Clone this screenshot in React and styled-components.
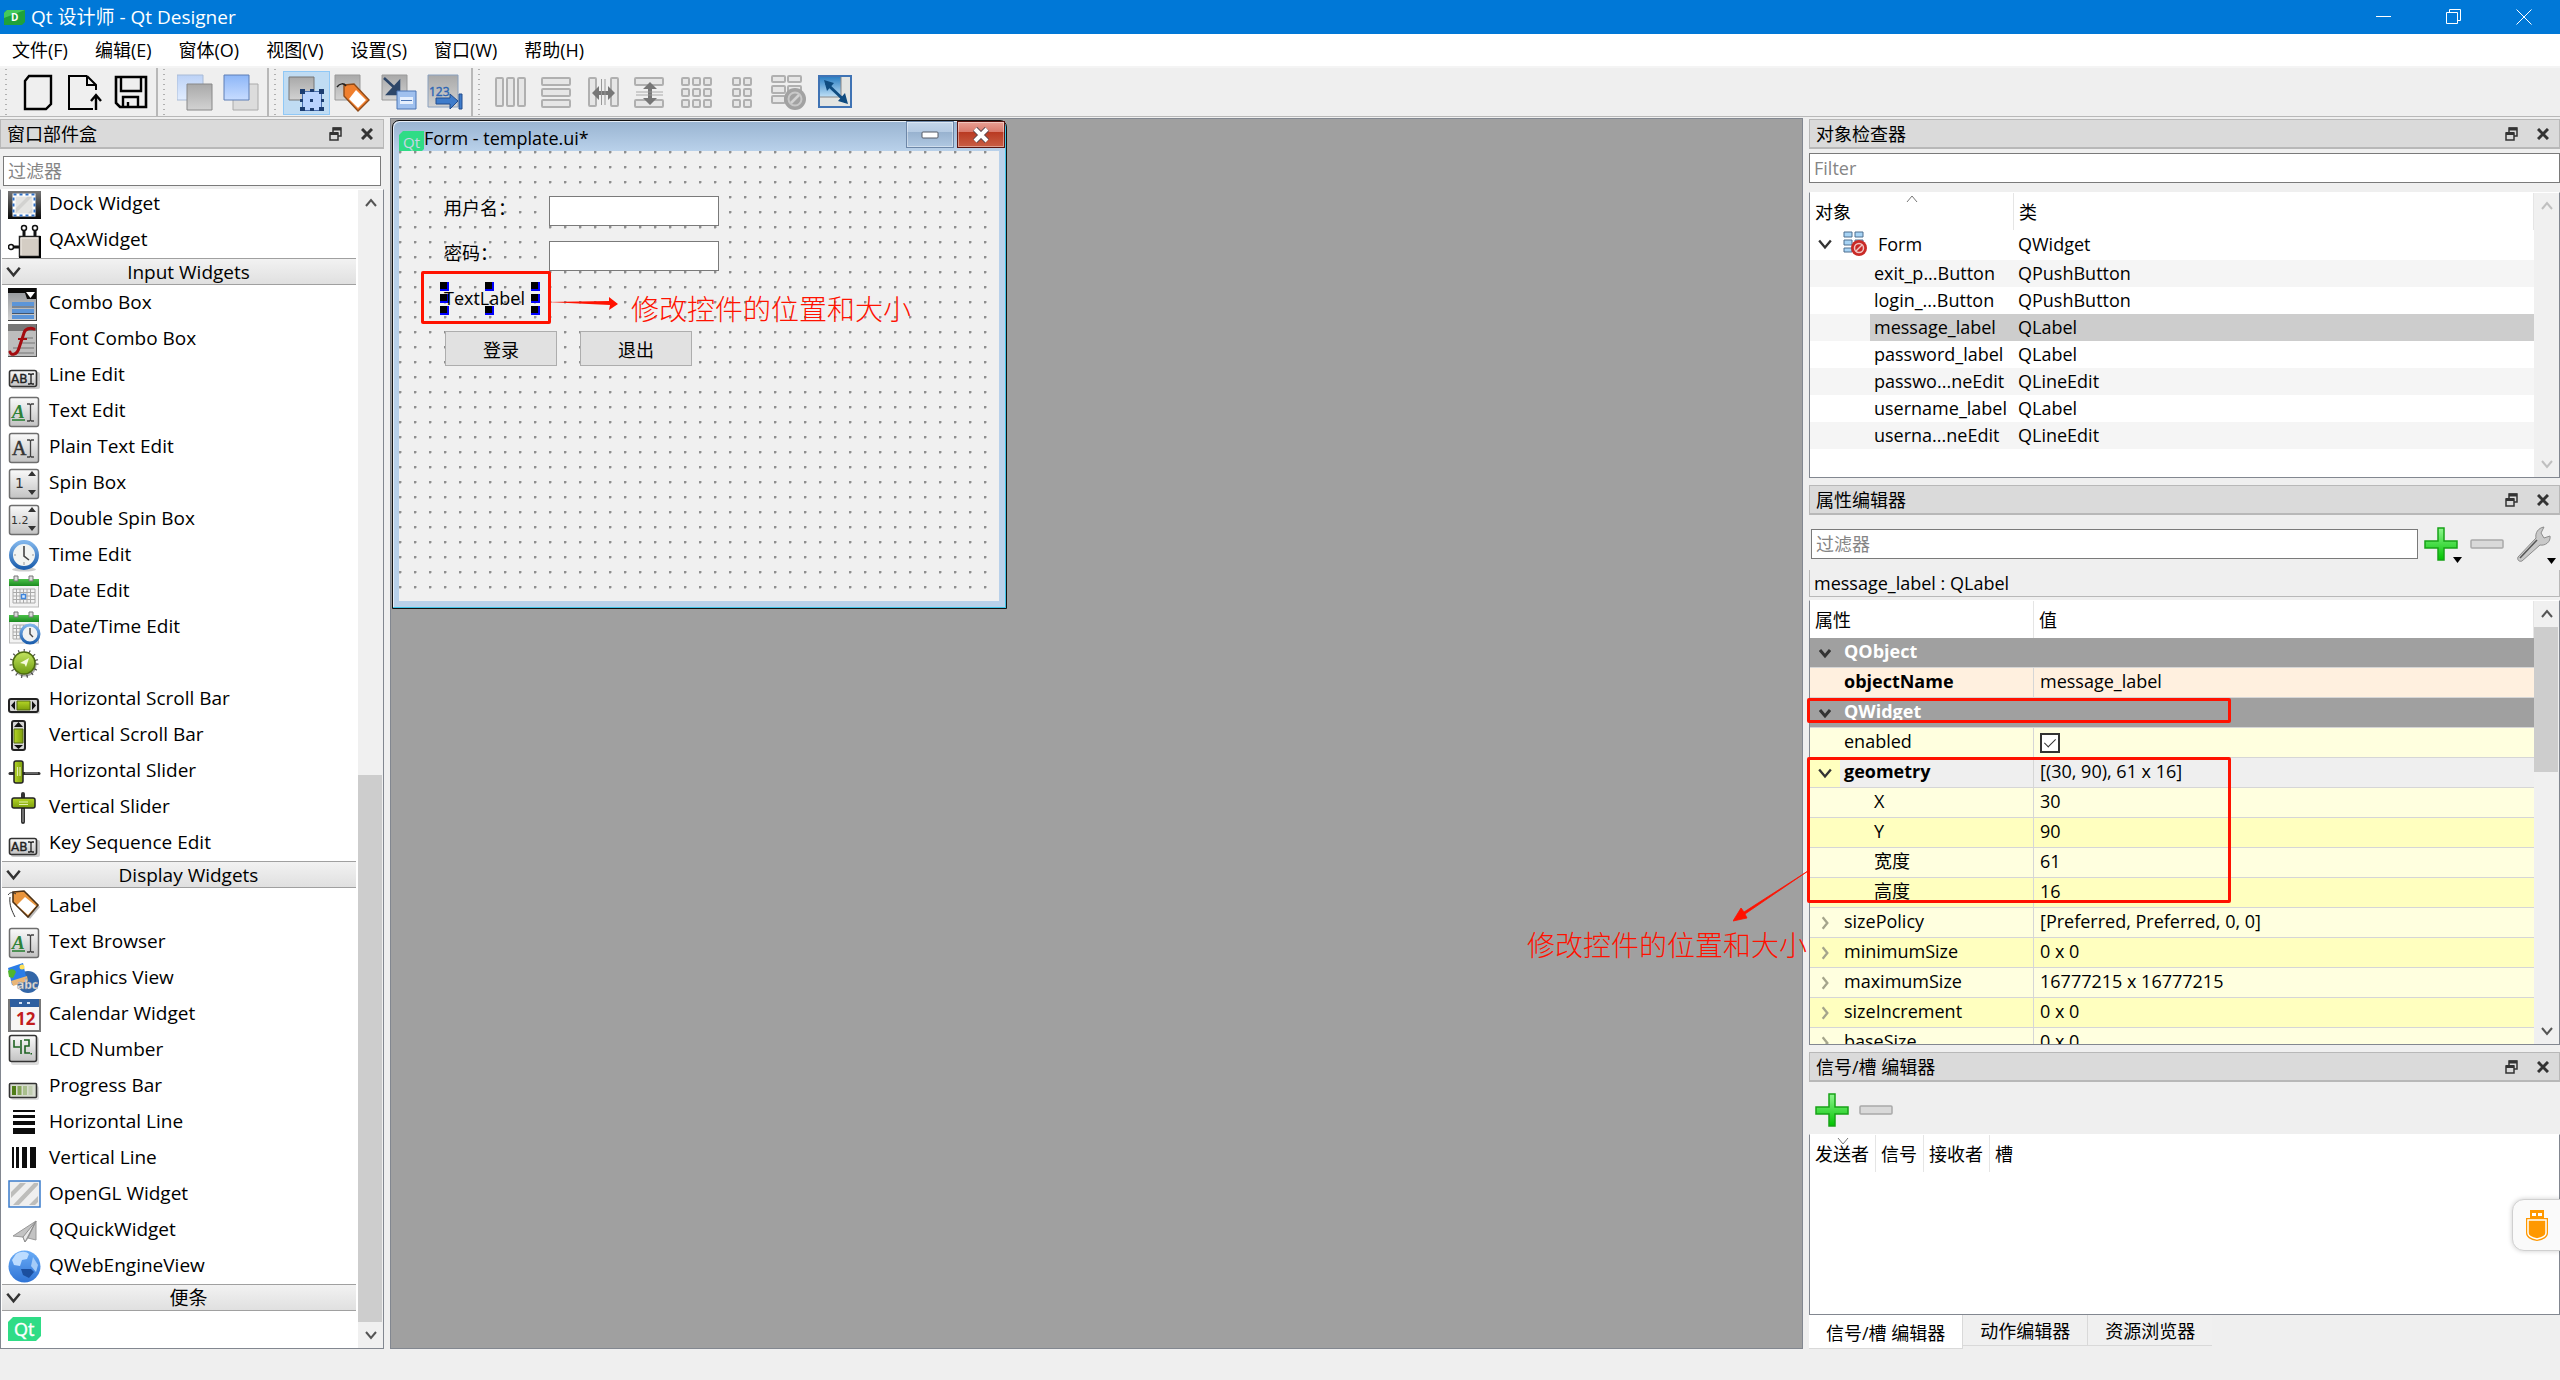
import React, { useState } from 'react';
import styled, { createGlobalStyle, css } from 'styled-components';

const menus = ['文件(F)', '编辑(E)', '窗体(O)', '视图(V)', '设置(S)', '窗口(W)', '帮助(H)'];

const toolGroups = [
    ['new', 'open', 'save'],
    ['back', 'front'],
    ['editWidgets', 'editSignals', 'editBuddies', 'editTabOrder'],
    ['hLayout', 'vLayout', 'hSplit', 'vSplit', 'grid', 'formLayout', 'breakLayout', 'adjustSize'],
];

const widgetGroups = [
    {
        title: null,
        items: [['dock', 'Dock Widget'], ['ax', 'QAxWidget']],
    },
    {
        title: 'Input Widgets',
        items: [
            ['combo', 'Combo Box'],
            ['fontCombo', 'Font Combo Box'],
            ['lineEdit', 'Line Edit'],
            ['textEdit', 'Text Edit'],
            ['plainText', 'Plain Text Edit'],
            ['spin', 'Spin Box'],
            ['doubleSpin', 'Double Spin Box'],
            ['time', 'Time Edit'],
            ['date', 'Date Edit'],
            ['dateTime', 'Date/Time Edit'],
            ['dial', 'Dial'],
            ['hScroll', 'Horizontal Scroll Bar'],
            ['vScroll', 'Vertical Scroll Bar'],
            ['hSlider', 'Horizontal Slider'],
            ['vSlider', 'Vertical Slider'],
            ['lineEdit', 'Key Sequence Edit'],
        ],
    },
    {
        title: 'Display Widgets',
        items: [
            ['label', 'Label'],
            ['textEdit', 'Text Browser'],
            ['graphics', 'Graphics View'],
            ['calendar', 'Calendar Widget'],
            ['lcd', 'LCD Number'],
            ['progress', 'Progress Bar'],
            ['hLine', 'Horizontal Line'],
            ['vLine', 'Vertical Line'],
            ['openGL', 'OpenGL Widget'],
            ['quick', 'QQuickWidget'],
            ['web', 'QWebEngineView'],
        ],
    },
    {
        title: '便条',
        items: [['qt', '']],
    },
];

const objects = [
    ['exit_p...Button', 'QPushButton'],
    ['login_...Button', 'QPushButton'],
    ['message_label', 'QLabel'],
    ['password_label', 'QLabel'],
    ['passwo...neEdit', 'QLineEdit'],
    ['username_label', 'QLabel'],
    ['userna...neEdit', 'QLineEdit'],
];

const properties = [
    { name: 'QObject', group: true },
    { name: 'objectName', value: 'message_label', bold: true, bg: '#fff0df' },
    { name: 'QWidget', group: true },
    { name: 'enabled', check: true, bg: '#ffffdf' },
    { name: 'geometry', value: '[(30, 90), 61 x 16]', bold: true, open: true, bg: '#efefef' },
    { name: 'X', value: '30', sub: true, bg: '#ffffdf' },
    { name: 'Y', value: '90', sub: true, bg: '#ffffbf' },
    { name: '宽度', value: '61', sub: true, bg: '#ffffdf' },
    { name: '高度', value: '16', sub: true, bg: '#ffffbf' },
    { name: 'sizePolicy', value: '[Preferred, Preferred, 0, 0]', closed: true, bg: '#ffffdf' },
    { name: 'minimumSize', value: '0 x 0', closed: true, bg: '#ffffbf' },
    { name: 'maximumSize', value: '16777215 x 16777215', closed: true, bg: '#ffffdf' },
    { name: 'sizeIncrement', value: '0 x 0', closed: true, bg: '#ffffbf' },
    { name: 'baseSize', value: '0 x 0', closed: true, bg: '#ffffdf' },
];

// selection handles around the label: [x, y]
const handles = [
    [41, 131], [86, 131], [132, 131],
    [41, 143], [132, 143],
    [41, 155], [86, 155], [132, 155],
];

const serif = 'Liberation Serif, serif';
const sans = 'Open Sans, sans-serif';

const Frame = ({ y = 4, h = 30, w = 29 }) => (
    <rect x="1.5" y={y + 0.5} width={w} height={h - 1} rx="2" fill="url(#gray)" stroke="#6e6e6e" strokeWidth="1.5" />
);

const IBeam = ({ x }) => (
    <path d={`M${x - 3} 11h2.5l1 1 1-1h2.5M${x + 0.5} 12v15M${x - 3} 28h2.5l1-1 1 1h2.5`} fill="none" stroke="#444" strokeWidth="1.3" />
);

const Arrows = () => <path d="M20 11h8l-4-5zM20 25h8l-4 5z" fill="#333" />;

const CalendarBody = () => (
    <>
        <rect x="1.5" y="9" width="29" height="25" fill="#f3f3f3" stroke="#bbb" />
        <path d="M1 6h30v7H1z" fill="url(#greenBar)" />
        <path d="M6 3h4v5H6zM21 3h4v5h-4z" fill="#ddd" stroke="#777" />
        <path d="M5 16h22M5 19.500h22M5 23h22M5 26.500h22M5 30h22M5 16v14M8.500 16v14M12 16v14M15.500 16v14M19 16v14M22.500 16v14M27 16v14" stroke="#aaa" fill="none" />
    </>
);

const widgetIcons = {
    dock: (
        <>
            <path d="M0 5h33v28H0z" fill="url(#darkBar)" />
            <path d="M6 9h20v20H6z" fill="#e4e4e2" />
            <path d="M6 24L21 9h5L6 29zM18 29l8-8v5l-3 3z" fill="#d2d2d0" />
            <rect x="6" y="9" width="20" height="20" fill="none" stroke="#fff" strokeWidth="3" />
            <rect x="5.500" y="8.500" width="21" height="21" fill="none" stroke="#2f6fc4" strokeWidth="2" strokeDasharray="3 3" />
        </>
    ),
    ax: (
        <>
            <path d="M0 25h11M16 7v8M27 7v8" stroke="#111" strokeWidth="3" />
            <circle cx="16" cy="6" r="2.500" fill="#fff" stroke="#111" strokeWidth="1.500" />
            <circle cx="27" cy="6" r="2.500" fill="#fff" stroke="#111" strokeWidth="1.500" />
            <circle cx="3" cy="25" r="2.500" fill="#fff" stroke="#111" strokeWidth="1.500" />
            <path d="M11.500 14.500h20v20h-20z" fill="#d4cdc4" stroke="#222" strokeWidth="1.500" />
            <path d="M32 14v21.500H11" stroke="#000" strokeWidth="2" fill="none" />
            <path d="M13 33V16h17" stroke="#f2ede6" fill="none" />
        </>
    ),
    combo: (
        <>
            <path d="M0 3h29v33H0z" fill="url(#grayDark)" />
            <path d="M0 3h29v11H19l-2-6H0z" fill="#0a0a0a" />
            <path d="M18 7h9l-4.500 6z" fill="#fff" />
            <path d="M4 17h22v4H4zM4 24h22v4H4zM4 30h22v4H4z" fill="#5c95d8" />
            <path d="M4 22h22M4 28.500h22" stroke="#43556b" />
            <path d="M28.500 3v33M0 35.500h29" stroke="#444" />
        </>
    ),
    fontCombo: (
        <>
            <path d="M0 3h29v33H0z" fill="#bdbdbd" />
            <path d="M0 3h29v7H0z" fill="#777" />
            <path d="M14 17h11M14 22h13M5 27h21M8 32h18" stroke="#999" strokeWidth="2" />
            <path d="M2 31c1 4 7 3 9-4l5-15c1-4 6-6 10-4" fill="none" stroke="#a40c10" strokeWidth="3" strokeLinecap="round" />
            <path d="M10 18h9" stroke="#a40c10" strokeWidth="2" />
            <path d="M28.500 3v33M0 35.500h29" stroke="#555" />
        </>
    ),
    lineEdit: (
        <>
            <rect x="3" y="15" width="29" height="17" rx="2" fill="#0003" />
            <rect x="1.500" y="13.500" width="27" height="16" rx="2" fill="url(#gray)" stroke="#333" strokeWidth="1.600" />
            <text x="3" y="26" fontFamily="DejaVu Sans" fontSize="12" fill="#222" stroke="#222" strokeWidth=".4">AB</text>
            <path d="M20 17h2l1 1 1-1h2M23 18v8M20 27h2l1-1 1 1h2" fill="none" stroke="#222" strokeWidth="1.300" />
        </>
    ),
    textEdit: (
        <>
            <Frame />
            <text x="4" y="25" fontFamily={serif} fontStyle="italic" fontWeight="700" fontSize="19" fill="#2e8238">A</text>
            <path d="M4 27h13" stroke="#2e8238" strokeWidth="1.600" />
            <IBeam x={22} />
        </>
    ),
    plainText: (
        <>
            <Frame />
            <text x="4" y="26" fontFamily={serif} fontSize="20" fill="#333" stroke="#333" strokeWidth=".5">A</text>
            <IBeam x={22} />
        </>
    ),
    spin: (
        <>
            <Frame />
            <text x="7" y="23" fontFamily="DejaVu Sans" fontSize="14" fill="#333">1</text>
            <Arrows />
        </>
    ),
    doubleSpin: (
        <>
            <Frame />
            <text x="3" y="23" fontFamily="DejaVu Sans" fontSize="11" fill="#333">1.2</text>
            <Arrows />
        </>
    ),
    time: (
        <>
            <ellipse cx="16" cy="32.500" rx="12" ry="2" fill="#0003" />
            <circle cx="16" cy="18" r="13" fill="#f2f4f2" stroke="url(#blueRing)" strokeWidth="4" />
            <path d="M16 9v10l5 4" fill="none" stroke="#444" strokeWidth="1.600" />
            <path d="M6 18h2M24 18h2M16 25v3" stroke="#999" />
        </>
    ),
    date: (
        <>
            <CalendarBody />
            <path d="M13.500 21.500h4v4h-4z" fill="#d8eaff" stroke="#3f86dc" strokeWidth="1.400" />
        </>
    ),
    dateTime: (
        <>
            <CalendarBody />
            <circle cx="22" cy="25" r="9" fill="#f0f2f2" stroke="url(#blueRing)" strokeWidth="3" />
            <path d="M22 19v6l3 3" fill="none" stroke="#444" strokeWidth="1.400" />
        </>
    ),
    dial: (
        <>
            <circle cx="16" cy="18.500" r="13" fill="none" stroke="#555" strokeWidth="3" strokeDasharray="1.200 4.300" />
            <circle cx="17" cy="20" r="11.500" fill="#0005" />
            <circle cx="16" cy="18" r="11" fill="url(#dial)" stroke="#4d6b10" strokeWidth="1.500" />
            <path d="M12 18l9-5-3 9-1.500-3z" fill="#f6fbe0" />
        </>
    ),
    hScroll: (
        <>
            <rect x="2" y="19" width="30" height="14" rx="2" fill="#0002" />
            <rect x="1" y="18" width="29" height="13" rx="2" fill="#d6d6d6" stroke="#222" strokeWidth="2" />
            <path d="M9 20h13v9H9z" fill="url(#green)" stroke="#556b12" />
            <path d="M7 20v9l-4-4.500zM24 20v9l4-4.500z" fill="#111" />
        </>
    ),
    vScroll: (
        <>
            <rect x="4" y="4" width="13" height="29" rx="2" fill="#d6d6d6" stroke="#222" strokeWidth="2" />
            <path d="M6 12h9v14H6z" fill="url(#greenH)" stroke="#556b12" />
            <path d="M6 10h9l-4.500-5zM6 28h9l-4.500 4z" fill="#111" />
        </>
    ),
    hSlider: (
        <>
            <path d="M2 20.500h29" stroke="#333" strokeWidth="3" strokeLinecap="round" />
            <path d="M17 20h13" stroke="#999" />
            <rect x="6" y="8" width="9" height="22" rx="2" fill="url(#greenH)" stroke="#222" strokeWidth="1.500" />
            <path d="M9.500 14v9M12 14v9" stroke="#e3efad" strokeWidth="1.200" />
        </>
    ),
    vSlider: (
        <>
            <path d="M15 5v28" stroke="#333" strokeWidth="4" strokeLinecap="round" />
            <path d="M15 20v13" stroke="#aaa" />
            <rect x="4" y="9" width="23" height="10" rx="2" fill="url(#green)" stroke="#222" strokeWidth="1.500" />
            <path d="M11 13h9M11 15.500h9" stroke="#e3efad" strokeWidth="1.200" />
        </>
    ),
    label: (
        <>
            <path d="M6 4l12-1 13 14-10 12L6 14z" transform="translate(1 2)" fill="#0004" />
            <path d="M5 4l11-1 14 14-10 12L5 14z" fill="#e9953d" stroke="#4d3216" strokeWidth="1.600" />
            <path d="M17 9l11 9-8 9-11-10z" fill="#fff" />
            <path d="M0 7c2-3 5-3 8-1M2 9c-1 8 2 14 5 20" fill="none" stroke="#333" />
        </>
    ),
    graphics: (
        <>
            <circle cx="20" cy="22" r="11" fill="#3266a8" />
            <path d="M0 8l15-5 4 18-15 4z" fill="#2b7de8" />
            <path d="M0 11c3-3 7-2 8 1l-3 6-4-1z" fill="#51b52c" />
            <circle cx="14" cy="7" r="2.500" fill="#ffe25e" />
            <path d="M3 21l16-5 1 5-15 5z" fill="#e9b676" />
            <text x="9" y="29" fontFamily={sans} fontWeight="700" fontSize="12" fill="#e9e9e9" stroke="#8a8f96" strokeWidth=".5">abc</text>
        </>
    ),
    calendar: (
        <>
            <path d="M0 3h33v33H0z" fill="#777" />
            <path d="M3 9h28v25H3z" fill="#f6f6f6" />
            <path d="M2 3h29v8H2z" fill="#2e5f9f" />
            <path d="M11 6h3v2h-3zM19 6h3v2h-3z" fill="#d5e3f4" />
            <text x="8" y="29" fontFamily={sans} fontWeight="700" fontSize="17" fill="#c21d1d">12</text>
        </>
    ),
    lcd: (
        <>
            <rect x="3" y="5" width="28" height="28" rx="2" fill="#0002" />
            <rect x="1.500" y="3.500" width="27" height="26" rx="2" fill="url(#gray)" stroke="#333" strokeWidth="1.600" />
            <path d="M6 8v7h6M13 8v14M16 8h5v6h-4v7h5" fill="none" stroke="#1e6322" strokeWidth="1.600" />
            <path d="M22.500 21h1.500v1.500h-1.500z" fill="#1e6322" />
        </>
    ),
    progress: (
        <>
            <rect x="3" y="18" width="28" height="14" rx="2" fill="#0002" />
            <rect x="1.500" y="15.500" width="27" height="14" rx="1" fill="#d7dccf" stroke="#333" strokeWidth="1.600" />
            <path d="M4 18h4v9H4z" fill="#4f7d17" />
            <path d="M9.500 18h4v9h-4z" fill="#86a65a" />
            <path d="M15 18h4v9h-4z" fill="#a9bf8d" />
            <path d="M20.500 18h4v9h-4z" fill="#c0cdb0" />
        </>
    ),
    hLine: <path d="M5 6h22v2H5zM5 11h22v3H5zM5 17h22v4H5zM5 24h22v6H5z" fill="#0c0c0c" />,
    vLine: <path d="M4 7h2v21H4zM8 7h3v21H8zM14 7h5v21h-5zM22 7h6v21h-6z" fill="#0c0c0c" />,
    openGL: (
        <>
            <path d="M1 5h31v26H1z" fill="#efefef" stroke="#3b7ccc" strokeWidth="1.500" />
            <path d="M3 16L12 7h6L3 22zM5 29L26 7h4v2L11 29zM21 29l9-9v6l-3 3z" fill="#bdbdbb" />
        </>
    ),
    quick: (
        <>
            <path d="M5 24L28 9v19l-8-2-3 4-2-5z" fill="#c3c3c3" stroke="#999" />
            <path d="M28 9L15 25l2 5zM28 9l-8 17" fill="#e9e9e9" stroke="#909090" />
        </>
    ),
    web: (
        <>
            <circle cx="16.500" cy="18.500" r="16" fill="url(#globe)" />
            <path d="M8 6c5-3 10-3 13 0l-2 5-5 1-2 6-6-1-2-5z" fill="#bcdcff" />
            <path d="M13 21h10l3 3-5 6-6-3z" fill="#1b4f9f" />
            <path d="M25 9l5 8-2 7-5-6z" fill="#a5ccf8" />
        </>
    ),
    qt: (
        <>
            <path d="M5 6h28v19l-5 5H0V11z" fill="#2fdc86" />
            <text x="6" y="25" fontFamily={sans} fontSize="18" fill="#fff" stroke="#fff" strokeWidth=".4">Qt</text>
        </>
    ),
};

const Bars = ({ list }) => (
    <g fill="#e6e6e6" stroke="#b0b0b0" strokeWidth="2">
        {list.map(([x, y, w, h]) => (
            <rect key={`${x}-${y}`} x={x} y={y} width={w} height={h} rx="1" />
        ))}
    </g>
);

const cells = (xs, ys, w, h) => ys.flatMap((y) => xs.map((x) => [x, y, w, h]));

const toolIcons = {
    new: <path d="M10 2h22v28l-5 5H6V7z" fill="none" stroke="#000" strokeWidth="2.400" />,
    open: (
        <>
            <path d="M22 2H4v33h24M22 2l9 9v5M22 2v9h9" fill="none" stroke="#000" strokeWidth="2" />
            <path d="M31 36V22M26 27l5-6 5 6" fill="none" stroke="#000" strokeWidth="2.400" />
        </>
    ),
    save: (
        <>
            <path d="M4 3h30v30H8l-4-4z" fill="none" stroke="#000" strokeWidth="2.600" />
            <path d="M9 3v14h20V3M11 33V23h15v10M16 33v-5" fill="none" stroke="#000" strokeWidth="2.400" />
        </>
    ),
    back: (
        <>
            <path d="M0 1h26v25H0z" fill="url(#blueLight)" stroke="#a9bbd6" />
            <path d="M10 10h25v26H10z" fill="url(#grayTool)" stroke="#888" />
        </>
    ),
    front: (
        <>
            <path d="M10 10h25v26H10z" fill="#dcdcdc" stroke="#aaa" />
            <path d="M1 1h25v25H1z" fill="url(#blue)" stroke="#5f7fb5" />
        </>
    ),
    editWidgets: (
        <>
            <path d="M1 3h25v23H1z" fill="url(#grayTool)" stroke="#777" />
            <path d="M14.500 17.500h19v19h-19z" fill="#b9d3ff" stroke="#4a6fae" />
            <path d="M12 15h5v5h-5zM31 15h5v5h-5zM12 33h5v4h-5zM31 33h5v4h-5zM22 25h3v3h-3zM22 15h4v3h-4zM22 34h4v3h-4zM12 25h3v3h-3zM33 25h3v3h-3z" fill="#1b3c70" />
        </>
    ),
    editSignals: (
        <>
            <path d="M1 1h25v25H1z" fill="url(#grayTool)" stroke="#999" />
            <path d="M10 11l10-1 15 16-11 11-14-15z" fill="#f07f2e" stroke="#8f4a18" strokeWidth="1.400" />
            <path d="M22 16l10 10-8 8-9-9z" fill="#fff" />
            <path d="M3 13c3-4 7-4 9-1" fill="none" stroke="#222" strokeWidth="1.500" />
        </>
    ),
    editBuddies: (
        <>
            <path d="M1 1h25v25H1z" fill="url(#grayTool)" stroke="#999" />
            <path d="M3 4l13 12M18 8v12H7z" stroke="#2d4668" strokeWidth="2.600" fill="#2d4668" />
            <path d="M16 17h19v18H16z" fill="#9fc0ee" stroke="#4a74b4" />
            <path d="M19 23h13v7H19z" fill="#e5effd" />
            <path d="M20 26.500h11" stroke="#4a74b4" />
        </>
    ),
    editTabOrder: (
        <>
            <path d="M1 1h30v32H1z" fill="url(#grayTool)" stroke="#8aa0bd" />
            <text x="2" y="22" fontFamily={sans} fontSize="12" fill="#2e66b4" stroke="#2e66b4" strokeWidth=".4">123</text>
            <path d="M9 24h14v-4l8 7-8 8v-5H9z" fill="#3f7ccb" stroke="#234c8c" />
            <path d="M32 20h3v15h-3z" fill="#3f7ccb" stroke="#234c8c" />
        </>
    ),
    hLayout: <Bars list={[[4, 4, 7, 28], [15, 4, 7, 28], [26, 4, 7, 28]]} />,
    vLayout: <Bars list={[[4, 4, 28, 7], [4, 15, 28, 7], [4, 26, 28, 7]]} />,
    hSplit: (
        <>
            <Bars list={[[4, 4, 7, 28], [26, 4, 7, 28]]} />
            <path d="M7 19l7-7v5h9v-5l7 7-7 7v-5h-9v5z" fill="#777" />
            <path d="M16.500 5v26M20 5v26" stroke="#999" />
        </>
    ),
    vSplit: (
        <>
            <Bars list={[[4, 4, 28, 7], [4, 26, 28, 7]]} />
            <path d="M19 8l7 7h-5v9h5l-7 7-7-7h5v-9h-5z" fill="#777" />
            <path d="M5 18h27M5 21h27" stroke="#999" strokeWidth=".8" />
        </>
    ),
    grid: <Bars list={cells([4, 15, 26], [4, 15, 26], 7, 7)} />,
    formLayout: <Bars list={cells([9, 20], [4, 15, 26], 7, 7)} />,
    breakLayout: (
        <>
            <Bars list={[[1, 2, 13, 6], [17, 2, 13, 6], [1, 12, 13, 7], [17, 12, 13, 7], [1, 22, 13, 7]]} />
            <circle cx="24" cy="25" r="11" fill="#a2a2a2" />
            <circle cx="24" cy="25" r="6.500" fill="none" stroke="#c8c8c8" strokeWidth="2" />
            <path d="M20 29l8-8" stroke="#d2d2d2" strokeWidth="2.500" />
        </>
    ),
    adjustSize: (
        <>
            <path d="M2 2h32v31H2z" fill="#e3e5e2" stroke="#3f73b4" strokeWidth="2" />
            <path d="M3 3h21v20H3z" fill="url(#sky)" />
            <path d="M24 3v20H3" fill="none" stroke="#888" />
            <path d="M9 9l20 19" stroke="#0f4c80" strokeWidth="3" />
            <path d="M7 6l10 3-7 8zM31 30l-10-3 7-8z" fill="#0f4c80" />
        </>
    ),
};

const Gradient = ({ id, from, to, horizontal }) => (
    <linearGradient id={id} x1="0" y1="0" x2={horizontal ? 1 : 0} y2={horizontal ? 0 : 1}>
        <stop offset="0" stopColor={from} />
        <stop offset="1" stopColor={to} />
    </linearGradient>
);

const Gradients = () => (
    <DefsSvg aria-hidden="true">
        <defs>
            <Gradient id="gray" from="#fafafa" to="#c2c2c2" />
            <Gradient id="grayDark" from="#8d9196" to="#d3d3d3" />
            <Gradient id="grayTool" from="#a9a9a9" to="#d2d2d2" />
            <Gradient id="greenBar" from="#4cc24a" to="#1c8a20" />
            <Gradient id="darkBar" from="#777" to="#080808" />
            <Gradient id="blueRing" from="#7fb4ea" to="#1d5fae" />
            <Gradient id="green" from="#b4d526" to="#7c9e0c" />
            <Gradient id="greenH" from="#b4d526" to="#7c9e0c" horizontal />
            <Gradient id="dial" from="#c3e45f" to="#6f9e12" />
            <Gradient id="globe" from="#6aacf6" to="#2f74d6" />
            <Gradient id="blueLight" from="#bcd2f6" to="#e2edff" />
            <Gradient id="blue" from="#8db6f7" to="#c7dcff" />
            <Gradient id="sky" from="#2b7fc4" to="#bfe0f6" />
            <Gradient id="plus" from="#8ff58f" to="#00c400" />
        </defs>
    </DefsSvg>
);

const Chevron = ({ dir = 'down', color = '#333', size = 12, weight = 2 }) => {
    const paths = { down: 'M1 3l5 6 5-6', up: 'M1 9l5-6 5 6', right: 'M4 1l4 5-4 5' };
    return (
        <svg width={size} height={size} viewBox="0 0 12 12" aria-hidden="true">
            <path d={paths[dir]} fill="none" stroke={color} strokeWidth={weight} />
        </svg>
    );
};

const PlusIcon = () => (
    <svg width="34" height="34" viewBox="0 0 34 34" aria-hidden="true">
        <path d="M14 1h6v13h13v7H20v12h-6V21H1v-7h13z" fill="url(#plus)" stroke="#17a317" strokeWidth="1.500" />
    </svg>
);

const MinusIcon = () => (
    <svg width="34" height="34" viewBox="0 0 34 34" aria-hidden="true">
        <rect x="1" y="13" width="32" height="8" rx="1" fill="#d9d9d9" stroke="#a9a9a9" strokeWidth="1.500" />
    </svg>
);

const WrenchIcon = () => (
    <svg width="36" height="36" viewBox="0 0 36 36" aria-hidden="true">
        <path d="M2 31l18-19c-1-5 2-10 8-11l-3 6 3 5 6-2c1 6-5 10-10 9L6 35c-3 1-5-1-4-4z" fill="#c9c9c9" stroke="#8c8c8c" />
        <path d="M4 32L21 14" stroke="#555" strokeWidth="1.500" />
    </svg>
);

const DropMark = () => (
    <DropSvg width="9" height="6" viewBox="0 0 9 6" aria-hidden="true">
        <path d="M0 0h9L4.500 6z" fill="#000" />
    </DropSvg>
);

const FloatIcon = () => (
    <svg width="13" height="14" viewBox="0 0 13 14" aria-hidden="true">
        <path d="M4 5V1h8v8H9" fill="none" stroke="#333" strokeWidth="1.500" />
        <path d="M4 2h8" stroke="#333" strokeWidth="3" />
        <path d="M1 6h8v7H1z" fill="#dadada" stroke="#333" strokeWidth="1.500" />
        <path d="M1 6.500h8" stroke="#333" strokeWidth="3" />
    </svg>
);

const CloseIcon = () => (
    <svg width="12" height="12" viewBox="0 0 12 12" aria-hidden="true">
        <path d="M1 1l10 10M11 1L1 11" stroke="#333" strokeWidth="3" />
    </svg>
);

const DockTitle = ({ children }) => (
    <DockBar>
        <DockName>{children}</DockName>
        <DockButton aria-label="浮动"><FloatIcon /></DockButton>
        <DockButton aria-label="关闭"><CloseIcon /></DockButton>
    </DockBar>
);

// start / size are percentages of the track; without them the bar is disabled
const ScrollBar = ({ start, size }) => {
    const color = size ? '#555' : '#bfbfbf';
    return (
        <Scroll>
            <ScrollArrow><Chevron dir="up" color={color} /></ScrollArrow>
            <Track>{size && <Thumb style={{ top: `${start}%`, height: `${size}%` }} />}</Track>
            <ScrollArrow><Chevron color={color} /></ScrollArrow>
        </Scroll>
    );
};

const WidgetBox = () => (
    <LeftDock>
        <DockTitle>窗口部件盒</DockTitle>
        <WidgetFilter placeholder="过滤器" aria-label="过滤器" />
        <WidgetView>
            <WidgetList>
                {widgetGroups.map((group) => (
                    <React.Fragment key={group.title}>
                        {group.title && (
                            <Category>
                                <Chevron size={15} weight={2} />
                                <span>{group.title}</span>
                            </Category>
                        )}
                        {group.items.map(([icon, name]) => (
                            <WidgetItem key={name}>
                                <svg width="33" height="36" viewBox="0 0 33 36" aria-hidden="true">{widgetIcons[icon]}</svg>
                                <span>{name}</span>
                            </WidgetItem>
                        ))}
                    </React.Fragment>
                ))}
            </WidgetList>
            <ScrollBar start={50.5} size={49.5} />
        </WidgetView>
    </LeftDock>
);

const FormWindow = () => (
    <SubWindow>
        <SubTitle>
            <svg width="25" height="22" viewBox="0 0 25 22" aria-hidden="true">
                <path d="M4 0h21v18l-4 4H0V4z" fill="#2fdc86" />
                <text x="4" y="17" fontFamily={sans} fontSize="15" fill="#c9d6e6">Qt</text>
            </svg>
            <SubName>Form - template.ui*</SubName>
            <SubButton aria-label="最小化">
                <svg width="18" height="8" viewBox="0 0 18 8"><rect x="1" y="1" width="16" height="6" rx="1" fill="#fff" stroke="#555b66" /></svg>
            </SubButton>
            <SubButton $close aria-label="关闭">
                <svg width="18" height="16" viewBox="0 0 18 16">
                    <path d="M3 2l12 12M15 2L3 14" stroke="#5b4a50" strokeWidth="6" />
                    <path d="M3 2l12 12M15 2L3 14" stroke="#fff" strokeWidth="4" />
                </svg>
            </SubButton>
        </SubTitle>
        <Canvas>
            <FormLabel htmlFor="username" $x={45} $y={45}>用户名：</FormLabel>
            <FormInput id="username" $x={150} $y={45} />
            <FormLabel htmlFor="password" $x={45} $y={90}>密码：</FormLabel>
            <FormInput id="password" type="password" $x={150} $y={90} />
            {handles.map(([x, y]) => <Handle key={`${x}-${y}`} $x={x} $y={y} />)}
            <FormLabel as="span" $x={45} $y={135}>TextLabel</FormLabel>
            <FormButton $x={46} $y={180}>登录</FormButton>
            <FormButton $x={181} $y={180}>退出</FormButton>
            <RedBox $x={22} $y={120} $w={130} $h={53} />
            <Arrow $x={148} $y={145} width="72" height="14" viewBox="0 0 72 14" aria-hidden="true">
                <path d="M0 6l62-1 0-4 9 7-9 6 1-5z" fill="#ff1200" />
            </Arrow>
            <Note $x={232} $y={136}>修改控件的位置和大小</Note>
        </Canvas>
    </SubWindow>
);

const ObjectInspector = () => {
    const [selected, setSelected] = useState('message_label');

    return (
        <>
            <DockTitle>对象检查器</DockTitle>
            <InspectorFilter placeholder="Filter" aria-label="Filter" />
            <InspectorView>
                <TableArea>
                    <Table>
                        <colgroup><col width="204" /><col /></colgroup>
                        <thead>
                            <tr>
                                <Th>对象<SortMark><Chevron dir="up" color="#777" weight={1} /></SortMark></Th>
                                <Th>类</Th>
                            </tr>
                        </thead>
                        <tbody>
                            <tr>
                                <ObjectCell $root>
                                    <RootName>
                                        <Chevron size={14} weight={2} />
                                        <svg width="24" height="26" viewBox="0 0 24 26" aria-hidden="true">
                                            <g fill="#a7d3f4" stroke="#4c6f90">
                                                <path d="M1 1h8v5H1zM12 1h8v5h-8zM1 9h8v5H1zM12 9h8v5h-8zM1 17h8v4H1z" />
                                            </g>
                                            <circle cx="16" cy="17" r="8" fill="#c92a27" />
                                            <circle cx="16" cy="17" r="4.500" fill="none" stroke="#f0c5c3" strokeWidth="1.500" />
                                            <path d="M13 20l6-6" stroke="#f0c5c3" strokeWidth="1.500" />
                                        </svg>
                                        Form
                                    </RootName>
                                </ObjectCell>
                                <ClassCell>QWidget</ClassCell>
                            </tr>
                            {objects.map(([name, type]) => (
                                <ObjectRow key={name} $selected={name === selected} onClick={() => setSelected(name)}>
                                    <ObjectCell>{name}</ObjectCell>
                                    <ClassCell>{type}</ClassCell>
                                </ObjectRow>
                            ))}
                        </tbody>
                    </Table>
                </TableArea>
                <ScrollBar />
            </InspectorView>
        </>
    );
};

const PropertyRow = ({ item }) => {
    if (item.group) {
        return (
            <tr>
                <GroupCell colSpan={2}><Gutter><Chevron size={12} weight={3} /></Gutter>{item.name}</GroupCell>
            </tr>
        );
    }
    return (
        <tr>
            <NameCell $bg={item.bg} $bold={item.bold} $sub={item.sub}>
                <Gutter $open={item.open}>
                    {item.open && <Chevron size={14} weight={2} />}
                    {item.closed && <Chevron dir="right" color="#a5a58c" size={14} weight={2} />}
                </Gutter>
                {item.name}
            </NameCell>
            <ValueCell $bg={item.bg}>
                {item.check ? <Check type="checkbox" defaultChecked aria-label={item.name} /> : item.value}
            </ValueCell>
        </tr>
    );
};

const PropertyEditor = () => (
    <>
        <DockTitle>属性编辑器</DockTitle>
        <PropertyBar>
            <FilterInput placeholder="过滤器" aria-label="过滤器" />
            <IconButton aria-label="添加"><PlusIcon /><DropMark /></IconButton>
            <IconButton aria-label="删除"><MinusIcon /></IconButton>
            <IconButton aria-label="配置"><WrenchIcon /><DropMark /></IconButton>
        </PropertyBar>
        <ObjectPath>message_label : QLabel</ObjectPath>
        <PropertyWrap>
            <PropertyView>
                <TableArea>
                    <Table>
                        <colgroup><col width="224" /><col /></colgroup>
                        <thead>
                            <tr><Th>属性</Th><Th>值</Th></tr>
                        </thead>
                        <tbody>
                            {properties.map((item) => <PropertyRow key={item.name} item={item} />)}
                        </tbody>
                    </Table>
                </TableArea>
                <ScrollBar start={0} size={37} />
            </PropertyView>
            <RedBox $x={-2} $y={98} $w={424} $h={25} />
            <RedBox $x={-2} $y={157} $w={424} $h={146} />
            <Arrow $x={-76} $y={271} width="76" height="52" viewBox="0 0 76 52" aria-hidden="true">
                <path d="M75 0L11 41l-3-4-8 13 14-3-2-4z" fill="#ff1200" stroke="#ff1200" strokeWidth=".8" />
            </Arrow>
            <Note $x={-282} $y={323}>修改控件的位置和大小</Note>
        </PropertyWrap>
    </>
);

const SignalEditor = () => (
    <>
        <DockTitle>信号/槽 编辑器</DockTitle>
        <SignalBar>
            <IconButton aria-label="添加"><PlusIcon /></IconButton>
            <IconButton aria-label="删除"><MinusIcon /></IconButton>
        </SignalBar>
        <SignalView>
            <SignalTable>
                <thead>
                    <tr>
                        <Th>发送者<SortMark><Chevron color="#777" weight={1} /></SortMark></Th>
                        <Th>信号</Th>
                        <Th>接收者</Th>
                        <Th>槽</Th>
                    </tr>
                </thead>
            </SignalTable>
        </SignalView>
        <Tabs>
            <Tab $active>信号/槽 编辑器</Tab>
            <Tab>动作编辑器</Tab>
            <Tab>资源浏览器</Tab>
        </Tabs>
    </>
);

const App = () => (
    <Page>
        <GlobalStyle />
        <Gradients />
        <TitleBar>
            <svg width="21" height="15" viewBox="0 0 21 15" aria-hidden="true">
                <path d="M3 0h18v12l-3 3H0V3z" fill="#1fa23a" />
                <path d="M3 0h18L0 8V3z" fill="#44c95c" />
                <text x="7" y="11" fontFamily={sans} fontWeight="700" fontSize="10" fill="#fff">D</text>
            </svg>
            <AppName>Qt 设计师 - Qt Designer</AppName>
            <WindowButton aria-label="最小化"><svg width="16" height="16"><path d="M0 7.500h15" stroke="#fff" /></svg></WindowButton>
            <WindowButton aria-label="还原">
                <svg width="16" height="16"><path d="M.5 3.500h11v11H.5zM3.500 3V.5h11v11H12" fill="none" stroke="#fff" /></svg>
            </WindowButton>
            <WindowButton aria-label="关闭"><svg width="16" height="16"><path d="M.5.5l15 15M15.500.5l-15 15" stroke="#fff" /></svg></WindowButton>
        </TitleBar>
        <MenuBar>
            {menus.map((menu) => <MenuButton key={menu}>{menu}</MenuButton>)}
        </MenuBar>
        <ToolBar>
            {toolGroups.map((group) => (
                <ToolGroup key={group[0]} $count={group.length}>
                    {group.map((name) => (
                        <ToolButton key={name} aria-label={name} $active={name === 'editWidgets'}>
                            <svg width="37" height="38" viewBox="0 0 37 38" aria-hidden="true">{toolIcons[name]}</svg>
                        </ToolButton>
                    ))}
                </ToolGroup>
            ))}
        </ToolBar>
        <Workspace>
            <WidgetBox />
            <MdiArea>
                <FormWindow />
            </MdiArea>
            <RightDock>
                <ObjectInspector />
                <PropertyEditor />
                <SignalEditor />
            </RightDock>
        </Workspace>
        <StatusBar />
        <UsbBadge aria-label="USB">
            <svg width="24" height="31" viewBox="0 0 24 31" aria-hidden="true">
                <path d="M5 0h14v8h4v15c0 4-4 7-11 8C5 30 1 27 1 23V8h4z" fill="#ff9800" />
                <path d="M7 3h4v3H7zM13 3h4v3h-4z" fill="#fff" />
                <path d="M3 10h18v13c0 3-4 5-9 6-5-1-9-3-9-6z" fill="none" stroke="#fff" strokeWidth="1.500" />
            </svg>
        </UsbBadge>
    </Page>
);

export default App;

// Styled Components
const GlobalStyle = createGlobalStyle`
  * {
    box-sizing: border-box;
  }

  body {
    margin: 0;
    background: #efefef;
    color: #000;
    font-family: "Open Sans", "Noto Sans CJK SC", sans-serif;
    font-size: 18px;
  }

  button, input {
    margin: 0;
    padding: 0;
    border: 0;
    border-radius: 0;
    background: none;
    color: inherit;
    font: inherit;
  }

  svg {
    display: block;
    flex: none;
  }
`;

const DefsSvg = styled.svg`
  position: absolute;
  width: 0;
  height: 0;
`;

const Page = styled.div`
  display: flex;
  flex-direction: column;
  height: 100vh;
  overflow: hidden;
`;

const TitleBar = styled.header`
  display: flex;
  align-items: center;
  flex: none;
  height: 34px;
  padding: 0 1px 0 4px;
  background: #0078d7;
  color: #fff;
`;

const AppName = styled.h1`
  flex: 1;
  margin: 0 0 0 6px;
  font-size: 19px;
  font-weight: 400;
  line-height: 34px;
`;

const WindowButton = styled.button`
  display: grid;
  place-items: center;
  width: 70px;
  height: 34px;
`;

const MenuBar = styled.nav`
  display: flex;
  flex: none;
  height: 34px;
  background: #fff;
  border-bottom: 2px solid #f4f4f4;
`;

const MenuButton = styled.button`
  padding: 0 15px 0 12px;
  line-height: 32px;
`;

const ToolBar = styled.div`
  display: flex;
  flex: none;
  height: 49px;
  border-bottom: 1px solid #b8b8b8;
`;

const ToolGroup = styled.div`
  display: grid;
  grid-template-columns: repeat(${({ $count }) => $count}, 1fr);
  align-items: center;
  width: ${({ $count }) => Math.round($count * 46.5) + 18}px;
  padding: 1px 2px 0 14px;
  border-right: 2px solid #b8b8b8;
  background: radial-gradient(circle, #b0b0b0 1px, transparent 1px) 4px 4px / 4px 5px repeat-y;

  &:last-child {
    border-right-color: transparent;
  }
`;

const ToolButton = styled.button`
  display: grid;
  place-items: center;
  height: 44px;
  border: 1px solid ${({ $active }) => ($active ? '#90c8f6' : 'transparent')};
  background: ${({ $active }) => ($active ? '#c0dcf3' : 'none')};
`;

const Workspace = styled.main`
  display: flex;
  flex: 1;
  min-height: 0;
  padding-top: 1px;
`;

const LeftDock = styled.aside`
  display: flex;
  flex-direction: column;
  flex: none;
  width: 384px;
  margin: 1px 6px 0 0;
`;

const RightDock = styled.aside`
  display: flex;
  flex-direction: column;
  flex: none;
  width: 751px;
  margin: 1px 0 0 6px;
`;

const MdiArea = styled.section`
  position: relative;
  flex: 1;
  min-width: 0;
  border: 1px solid #828790;
  background: #a0a0a0;
`;

const DockBar = styled.div`
  display: flex;
  align-items: center;
  flex: none;
  height: 30px;
  padding: 1px 6px 0 0;
  border: 1px solid #b8b8b8;
  border-bottom-width: 2px;
  background: #dadada;
`;

const DockName = styled.h2`
  flex: 1;
  margin: 0 0 0 6px;
  font-size: 18px;
  font-weight: 400;
  line-height: 26px;
`;

const DockButton = styled.button`
  display: grid;
  place-items: center;
  width: 20px;
  height: 26px;
  margin-left: 12px;
`;

const FilterInput = styled.input`
  flex: 1;
  min-width: 0;
  height: 30px;
  padding: 0 4px;
  border: 1px solid #7a7a7a;
  background: #fff;

  &::placeholder {
    color: #858585;
    opacity: 1;
  }
`;

const WidgetFilter = styled(FilterInput)`
  flex: none;
  margin: 7px 3px 3px;
`;

const InspectorFilter = styled(FilterInput)`
  flex: none;
  margin: 4px 0 9px;
`;

const viewFrame = css`
  display: flex;
  border: 1px solid #828790;
  border-top-color: #fff;
  background: #fff;
  overflow: hidden;
`;

const WidgetView = styled.div`
  ${viewFrame}
  flex: 1;
  min-height: 0;
`;

const WidgetList = styled.div`
  display: flex;
  flex-direction: column;
  justify-content: flex-end;
  flex: 1;
  padding: 0 0 1px 1px;
`;

const WidgetItem = styled.div`
  display: flex;
  align-items: center;
  gap: 8px;
  flex: none;
  height: 36px;
  padding-left: 6px;
  font-size: 19px;
  line-height: 32px;
  white-space: nowrap;

  span {
    height: 34px;
  }
`;

const Category = styled.button`
  display: flex;
  align-items: center;
  flex: none;
  height: 27px;
  margin-right: 2px;
  padding-left: 4px;
  border-top: 1px solid #a0a0a0;
  border-bottom: 1px solid #a0a0a0;
  background: linear-gradient(#f2f2f2, #e0e0e0);
  font-size: 19px;
  line-height: 24px;
  text-align: center;

  span {
    flex: 1;
  }
`;

const Scroll = styled.div`
  display: flex;
  flex-direction: column;
  flex: none;
  width: 25px;
  background: #f0f0f0;
`;

const ScrollArrow = styled.div`
  display: grid;
  place-items: center;
  height: 26px;
`;

const Track = styled.div`
  position: relative;
  flex: 1;
`;

const Thumb = styled.div`
  position: absolute;
  left: 0;
  right: 1px;
  background: #cdcdcd;
`;

const SubWindow = styled.section`
  position: absolute;
  left: 1px;
  top: 1px;
  width: 615px;
  padding: 0 7px 7px 6px;
  border: 1px solid #111;
  border-radius: 7px 7px 0 0;
  background: linear-gradient(#99b4d1, #b9d1ea 30px);
  box-shadow: inset -1px -1px #3fc3e6, inset 1px 1px #e6eef7;
`;

const SubTitle = styled.div`
  display: flex;
  height: 30px;
  margin-right: -6px;

  > svg {
    margin-top: 10px;
  }
`;

const SubName = styled.h3`
  flex: 1;
  margin: 0;
  font-size: 18px;
  font-weight: 400;
  line-height: 34px;
`;

const SubButton = styled.button`
  display: grid;
  place-items: center;
  width: 48px;
  height: 27px;
  margin-left: 3px;
  border: 1px solid ${({ $close }) => ($close ? '#5a1410' : '#6d87a8')};
  box-shadow: inset 0 0 0 1px #fff6;
  background: ${({ $close }) =>
    $close
        ? 'linear-gradient(#e8a094, #d9796b 40%, #b93a22 41%, #c95e45)'
        : 'linear-gradient(#c3d6ea, #b4cae2 40%, #98b2cf 41%, #b0c8e2)'};
`;

const Canvas = styled.div`
  position: relative;
  height: 450px;
  background: #f0f0f0 radial-gradient(circle at 1px 1px, #8e8e8e 1px, transparent 2px) 0 0 / 15px 15px;
`;

const placed = css`
  position: absolute;
  left: ${({ $x }) => $x}px;
  top: ${({ $y }) => $y}px;
`;

const FormLabel = styled.label`
  ${placed}
  line-height: 24px;
  white-space: nowrap;
`;

const FormInput = styled.input`
  ${placed}
  width: 170px;
  height: 30px;
  border: 1px solid #7a7a7a;
  background: #fff;
`;

const FormButton = styled.button`
  ${placed}
  width: 112px;
  height: 35px;
  border: 1px solid #adadad;
  background: #e1e1e1;
`;

const Handle = styled.i`
  ${placed}
  width: 9px;
  height: 9px;
  background: #000;
  border-right: 2px solid #0000ff;
  border-bottom: 2px solid #0000ff;
`;

const RedBox = styled.div`
  ${placed}
  width: ${({ $w }) => $w}px;
  height: ${({ $h }) => $h}px;
  border: 3px solid #ff1200;
  border-radius: 2px;
  pointer-events: none;
`;

const Arrow = styled.svg`
  ${placed}
`;

const Note = styled.p`
  ${placed}
  margin: 0;
  color: #ff1200;
  font-family: "Noto Sans CJK SC", sans-serif;
  font-size: 28px;
  font-weight: 300;
  line-height: 42px;
  white-space: nowrap;
`;

const InspectorView = styled.div`
  ${viewFrame}
  flex: none;
  height: 286px;
  margin-bottom: 7px;
`;

const TableArea = styled.div`
  flex: 1;
  min-width: 0;
`;

const Table = styled.table`
  width: 100%;
  table-layout: fixed;
  border-spacing: 0;
`;

const Th = styled.th`
  position: relative;
  height: 37px;
  padding: 0 6px 0 5px;
  border-right: 1px solid #e5e5e5;
  background: #fff;
  font-weight: 400;
  line-height: 24px;
  text-align: left;
  white-space: nowrap;
`;

const SortMark = styled.span`
  position: absolute;
  left: calc(50% - 6px);
  top: 0;
`;

const ObjectCell = styled.td`
  height: ${({ $root }) => ($root ? 30 : 27)}px;
  padding: 0 0 2px ${({ $root }) => ($root ? 8 : 64)}px;
  line-height: 24px;
  white-space: nowrap;
`;

const ClassCell = styled.td`
  padding: 0 0 2px 4px;
  line-height: 24px;
`;

const ObjectRow = styled.tr`
  &:nth-child(even) td {
    background: #f5f5f5;
  }

  ${({ $selected }) =>
    $selected &&
    css`
      && td {
        background: #cdcdcd;
      }

      && td:first-child {
        background: linear-gradient(to right, #f5f5f5 60px, #cdcdcd 60px);
      }
    `}
`;

const RootName = styled.div`
  display: flex;
  align-items: center;
  gap: 11px;
`;

const PropertyBar = styled.div`
  display: flex;
  align-items: center;
  gap: 12px;
  flex: none;
  height: 34px;
  margin: 12px 8px 9px 2px;

  > input {
    margin-right: -6px;
  }
`;

const IconButton = styled.button`
  position: relative;
`;

const DropSvg = styled.svg`
  position: absolute;
  right: -4px;
  bottom: -2px;
`;

const ObjectPath = styled.div`
  flex: none;
  height: 27px;
  margin-bottom: 3px;
  padding-left: 4px;
  border: 1px solid #b8b8b8;
  border-top: 0;
  line-height: 27px;
`;

const PropertyWrap = styled.div`
  position: relative;
  display: flex;
  flex: 1;
  min-height: 0;
  margin-bottom: 7px;
`;

const PropertyView = styled.div`
  ${viewFrame}
  flex: 1;
`;

const Gutter = styled.span`
  display: inline-grid;
  place-items: center;
  width: 30px;
  height: 29px;
  margin-right: 4px;
  vertical-align: top;
  background: ${({ $open }) => ($open ? '#ffffbf' : 'none')};
`;

const propertyCell = css`
  height: 30px;
  padding: 0;
  border-bottom: 1px solid #d6d6d6;
  line-height: 26px;
  vertical-align: top;
  white-space: nowrap;
`;

const GroupCell = styled.td`
  ${propertyCell}
  background: #a0a0a0;
  color: #fff;
  font-weight: 700;
`;

const NameCell = styled.td`
  ${propertyCell}
  border-right: 1px solid #d6d6d6;
  background: ${({ $bg }) => $bg};
  font-weight: ${({ $bold }) => ($bold ? 700 : 400)};

  ${Gutter} {
    margin-right: ${({ $sub }) => ($sub ? 34 : 4)}px;
  }
`;

const ValueCell = styled.td`
  ${propertyCell}
  padding-left: 6px;
  background: ${({ $bg }) => $bg};
`;

const Check = styled.input`
  display: block;
  position: relative;
  width: 20px;
  height: 20px;
  margin-top: 5px;
  border: 2px solid #333;
  background: #fff;
  appearance: none;

  &:checked::after {
    content: '';
    position: absolute;
    left: 5px;
    top: 1px;
    width: 5px;
    height: 10px;
    border: solid #333;
    border-width: 0 1px 1px 0;
    transform: rotate(45deg);
  }
`;

const SignalBar = styled.div`
  display: flex;
  align-items: center;
  gap: 10px;
  flex: none;
  height: 52px;
  padding: 3px 0 0 6px;
`;

const SignalView = styled.div`
  ${viewFrame}
  flex: none;
  height: 181px;
`;

const SignalTable = styled.table`
  align-self: flex-start;
  border-spacing: 0;

  th:last-child {
    border-right: 0;
  }
`;

const Tabs = styled.div`
  display: flex;
  align-items: flex-start;
  flex: none;
  height: 34px;
`;

const Tab = styled.button`
  height: ${({ $active }) => ($active ? 34 : 31)}px;
  padding: 0 17px;
  border-right: 1px solid #d9d9d9;
  border-bottom: 1px solid #d9d9d9;
  background: ${({ $active }) => ($active ? '#fff' : '#f0f0f0')};

  &:last-child {
    border-right: 0;
  }
`;

const StatusBar = styled.footer`
  flex: none;
  height: 31px;
`;

const UsbBadge = styled.button`
  position: fixed;
  right: -1px;
  bottom: 129px;
  display: grid;
  place-items: center;
  width: 49px;
  height: 52px;
  border: 1px solid #d0d0d0;
  border-radius: 12px 0 0 12px;
  background: #fafafa;
  box-shadow: 0 0 5px #0003;
`;
